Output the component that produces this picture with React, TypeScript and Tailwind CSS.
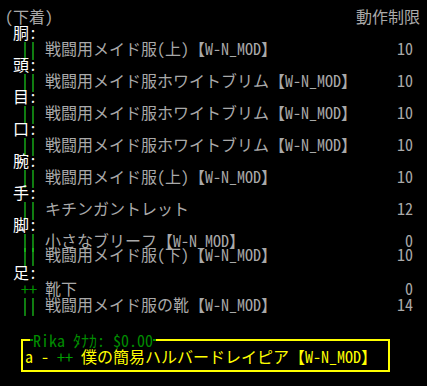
import React from "react";

type Item = { mark: "||" | "++"; name: string; limit: number };
type Slot = { part: string; items: Item[] };

const MEIDO_UE = "戦闘用メイド服(上)【W-N_MOD】";
const BRIM = "戦闘用メイド服ホワイトブリム【W-N_MOD】";

const slots: Slot[] = [
  { part: "胴", items: [{ mark: "||", name: MEIDO_UE, limit: 10 }] },
  { part: "頭", items: [{ mark: "||", name: BRIM, limit: 10 }] },
  { part: "目", items: [{ mark: "||", name: BRIM, limit: 10 }] },
  { part: "口", items: [{ mark: "||", name: BRIM, limit: 10 }] },
  { part: "腕", items: [{ mark: "||", name: MEIDO_UE, limit: 10 }] },
  { part: "手", items: [{ mark: "||", name: "キチンガントレット", limit: 12 }] },
  {
    part: "脚",
    items: [
      { mark: "||", name: "小さなブリーフ【W-N_MOD】", limit: 0 },
      { mark: "||", name: "戦闘用メイド服(下)【W-N_MOD】", limit: 10 },
    ],
  },
  {
    part: "足",
    items: [
      { mark: "++", name: "靴下", limit: 0 },
      { mark: "||", name: "戦闘用メイド服の靴【W-N_MOD】", limit: 14 },
    ],
  },
];

function ItemRow({ item, tight }: { item: Item; tight?: boolean }) {
  return (
    <div className={`flex h-4 leading-4 whitespace-pre ${tight ? "-mt-[2px]" : ""}`}>
      <span>{"  "}</span>
      <span className={item.mark === "||" ? "text-[#22d822]" : "text-[#009400]"}>{item.mark}</span>
      <span>{" "}</span>
      <span className="flex-1 text-[#a9a9a9]">{item.name}</span>
      <span className="w-10 text-right text-[#a9a9a9]">{item.limit}</span>
    </div>
  );
}

export default function App() {
  return (
    <div className="w-[427px] h-[386px] overflow-hidden bg-black pt-2 pl-[5px] pr-[14px] text-[16px] font-['Noto_Sans_Mono_CJK_JP','Noto_Sans_CJK_JP',monospace]">
      <div className="flex h-4 leading-4 justify-between text-[#a9a9a9] -mr-[7px]">
        <span>(下着)</span>
        <span>動作制限</span>
      </div>

      {slots.map((slot) => (
        <div key={slot.part}>
          <div className={`h-4 leading-4 whitespace-pre text-white ${slot.part === "足" ? "mt-[2px]" : ""}`}>
            {" " + slot.part + ":"}
          </div>
          {slot.items.map((item, i) => (
            <ItemRow key={i} item={item} tight={slot.part === "脚" && i === 1} />
          ))}
        </div>
      ))}

      <div className="relative mt-[27px] ml-4 w-[369px] h-[33px] border-2 border-[#ffff00] flex items-center pl-[2px]">
        <div className="absolute left-[7px] -top-[9px] flex items-center bg-black h-4 leading-4 whitespace-pre text-[#008c00]">
          <span className="w-[3px] h-[2px] bg-[#008c00]" />
          <span>Rika ﾀﾅｶ: $0.00</span>
          <span className="w-[3px] h-[2px] bg-[#008c00]" />
        </div>
        <div className="h-4 leading-4 whitespace-pre text-[#ffff00]">
          <span>a - </span>
          <span className="text-[#00a000]">++</span>
          <span> 僕の簡易ハルバードレイピア【W-N_MOD】</span>
        </div>
      </div>
    </div>
  );
}
